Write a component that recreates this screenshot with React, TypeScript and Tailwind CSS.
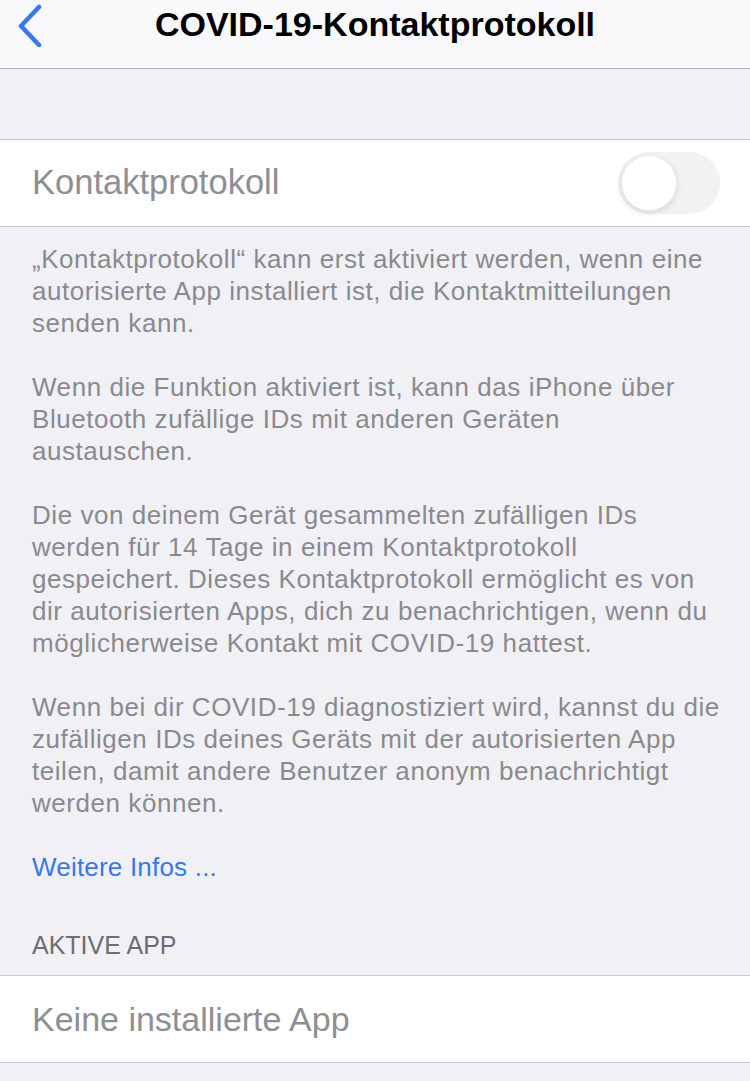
export default function App() {
  const paragraphs = [
    [
      '„Kontaktprotokoll“ kann erst aktiviert werden, wenn eine',
      'autorisierte App installiert ist, die Kontaktmitteilungen',
      'senden kann.',
    ],
    [
      'Wenn die Funktion aktiviert ist, kann das iPhone über',
      'Bluetooth zufällige IDs mit anderen Geräten',
      'austauschen.',
    ],
    [
      'Die von deinem Gerät gesammelten zufälligen IDs',
      'werden für 14 Tage in einem Kontaktprotokoll',
      'gespeichert. Dieses Kontaktprotokoll ermöglicht es von',
      'dir autorisierten Apps, dich zu benachrichtigen, wenn du',
      'möglicherweise Kontakt mit COVID-19 hattest.',
    ],
    [
      'Wenn bei dir COVID-19 diagnostiziert wird, kannst du die',
      'zufälligen IDs deines Geräts mit der autorisierten App',
      'teilen, damit andere Benutzer anonym benachrichtigt',
      'werden können.',
    ],
  ]

  return (
    <div className="min-h-screen bg-[#f0f0f5] font-['Liberation_Sans',Arial,sans-serif]">
      {/* nav bar */}
      <div className="relative h-[69px] bg-[#f9f9fb] border-b border-[#b2b2b2] flex items-start justify-center">
        <svg className="absolute left-[14px] top-[3px]" width="32" height="44" viewBox="0 0 32 44">
          <polyline
            points="25,4 7,23 25,42"
            fill="none"
            stroke="#3478f6"
            strokeWidth="4.5"
            strokeLinecap="round"
            strokeLinejoin="round"
          />
        </svg>
        <h1 className="mt-[4px] text-[34px] leading-[40px] font-bold text-black">COVID-19-Kontaktprotokoll</h1>
      </div>

      <div className="h-[70px]" />

      {/* toggle row */}
      <div className="h-[88px] bg-white border-y border-[#c8c7cc] flex items-center justify-between pl-[32px] pr-[30px]">
        <span className="text-[34.5px] text-[#8e8e93]">Kontaktprotokoll</span>
        <div className="w-[102px] h-[62px] rounded-full bg-[#f2f2f4] p-[3px] flex items-center">
          <div className="w-[56px] h-[56px] rounded-full bg-white shadow-[0_2px_6px_rgba(0,0,0,0.12)] border border-[#ececec]" />
        </div>
      </div>

      {/* footer */}
      <div className="pt-[16px] pl-[32px] pr-[10px] pb-[14px] text-[26px] leading-[32px] tracking-[0.55px] text-[#8a8a8e] whitespace-nowrap">
        {paragraphs.map((lines, i) => (
          <p key={i} className={i > 0 ? 'mt-8' : ''}>
            {lines.map((l, j) => (
              <span key={j} className="block">
                {l}
              </span>
            ))}
          </p>
        ))}
        <p className="mt-8 tracking-[0.2px] text-[#3478f6]">Weitere Infos ...</p>
        <p className="mt-[46px] text-[25px] tracking-normal text-[#6d6d72]">AKTIVE APP</p>
      </div>

      <div className="h-[88px] bg-white border-y border-[#c8c7cc] flex items-center pl-[32px]">
        <span className="text-[34px] text-[#8e8e93]">Keine installierte App</span>
      </div>
    </div>
  )
}
